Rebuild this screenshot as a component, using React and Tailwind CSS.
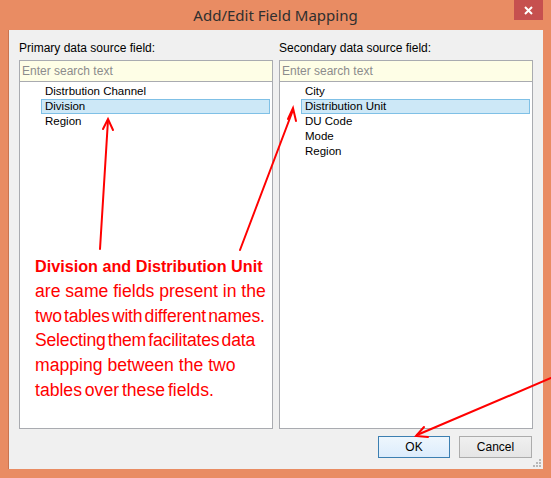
const leftItems = ["Distrbution Channel", "Division", "Region"];
const rightItems = ["City", "Distribution Unit", "DU Code", "Mode", "Region"];

const FieldPanel = ({ items, selected }) => (
  <div className="flex h-[369px] w-[254px] flex-col border border-[#a9abb0] bg-white">
    <div className="flex h-[21px] items-center border-b border-[#a9abb0] bg-[#fefee6] pl-[2px] text-[12px] text-[#8c8c8c]">
      Enter search text
    </div>
    <div className="flex flex-col pt-[2px] pr-[2px] pl-[21px]">
      {items.map((item) => (
        <div
          key={item}
          className={
            item === selected
              ? "flex h-[15px] items-center border border-[#7fc0e6] bg-[#cde8f7] pl-[3px] text-[11.5px] text-black"
              : "flex h-[15px] items-center border border-transparent pl-[3px] text-[11.5px] text-black"
          }
        >
          {item}
        </div>
      ))}
    </div>
  </div>
);

export default function App() {
  return (
    <div
      className="relative flex h-[478px] w-[551px] flex-col bg-[#e98c63]"
      style={{ fontFamily: '"Liberation Sans", Arial, sans-serif' }}
    >
      {/* title bar */}
      <div className="relative flex h-[30px] items-center justify-center">
        <span className="text-[15px] text-[#2f2f2f]" style={{ fontFamily: '"Noto Sans", sans-serif' }}>
          Add/Edit Field Mapping
        </span>
        <div className="absolute top-0 right-[8px] flex h-[20px] w-[29px] items-center justify-center bg-[#c6504f]">
          <svg width="9" height="9" viewBox="0 0 9 9">
            <path d="M1 1 L8 8 M8 1 L1 8" stroke="white" strokeWidth="2" />
          </svg>
        </div>
      </div>

      {/* client area */}
      <div className="relative mx-[8px] flex h-[439px] flex-col border-l border-[#c97450] bg-[#f0f0f0] pt-[10px] pl-[10px]">
        <div className="flex gap-[6px]">
          <div className="flex flex-col">
            <div className="h-[20px] text-[12px] leading-[16px] text-black">Primary data source field:</div>
            <FieldPanel items={leftItems} selected="Division" />
          </div>
          <div className="flex flex-col">
            <div className="h-[20px] text-[12px] leading-[16px] text-black">Secondary data source field:</div>
            <FieldPanel items={rightItems} selected="Distribution Unit" />
          </div>
        </div>

        <div className="mt-[7px] flex justify-end gap-[9px] pr-[11px]">
          <button className="h-[22px] w-[72px] border border-[#3c7fb1] bg-gradient-to-b from-[#eef6fd] to-[#dcecfc] text-[12px] text-black">
            OK
          </button>
          <button className="h-[22px] w-[73px] border border-[#acacac] bg-gradient-to-b from-[#f0f0f0] to-[#e5e5e5] text-[12px] text-black">
            Cancel
          </button>
        </div>

        {/* resize grip */}
        <svg className="absolute right-[2px] bottom-[2px]" width="10" height="10" viewBox="0 0 10 10">
          {[
            [8, 2],
            [5, 5],
            [8, 5],
            [2, 8],
            [5, 8],
            [8, 8],
          ].map(([x, y]) => (
            <rect key={`${x}-${y}`} x={x} y={y} width="2" height="2" fill="#b8b8b8" />
          ))}
        </svg>
      </div>

      {/* annotation */}
      <div className="absolute top-[254px] left-[35px] text-[17.6px] leading-[24.8px] text-[#ff0000]">
        <div className="text-[16.2px] font-bold">Division and Distribution Unit</div>
        <div>are same fields present in the</div>
        <div className="tracking-[-0.2px] [word-spacing:-2.5px]">two tables with different names.</div>
        <div className="tracking-[-0.2px] [word-spacing:-2.5px]">Selecting them facilitates data</div>
        <div>mapping between the two</div>
        <div className="[word-spacing:-2px]">tables over these fields.</div>
      </div>

      {/* arrows */}
      <svg className="pointer-events-none absolute top-0 left-0" width="551" height="478" viewBox="0 0 551 478">
        <g stroke="#ff0000" strokeWidth="2" fill="none" strokeLinecap="round">
          <path d="M100 249 L108 120" />
          <path d="M103 129 L108 119 L113 130" />
          <path d="M240 250 L293 110" />
          <path d="M288 119 L293 108 L296 121" />
          <path d="M551 378 L417 435" />
          <path d="M424 427 L416 436 L428 437" />
        </g>
      </svg>
    </div>
  );
}
